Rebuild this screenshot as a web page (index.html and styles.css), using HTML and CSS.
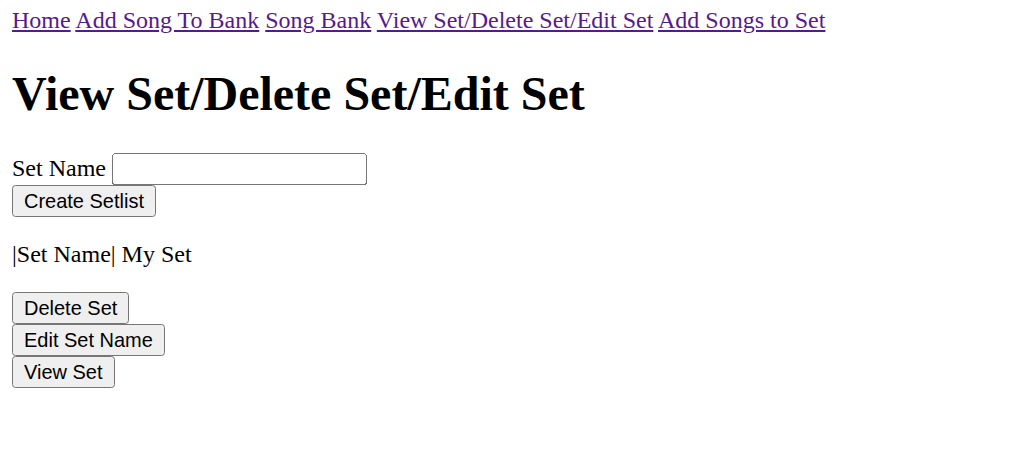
FILE: index.html
```html
<!DOCTYPE html>
<html>
<head>
<meta charset="utf-8">
<title>View Set</title>
<link rel="stylesheet" href="styles.css">
</head>
<body>
<nav class="nav"><a href="#">Home</a> <a href="#">Add Song To Bank</a> <a href="#">Song Bank</a> <a href="#">View Set/Delete Set/Edit Set</a> <a href="#">Add Songs to Set</a></nav>
<h1 class="title">View Set/Delete Set/Edit Set</h1>
<form class="create">
<label>Set Name</label> <input type="text" class="field"><br>
<button type="button" class="btn">Create Setlist</button>
</form>
<p class="set">|Set Name| My Set</p>
<form class="actions"><button type="button" class="btn">Delete Set</button></form>
<form class="actions"><button type="button" class="btn">Edit Set Name</button></form>
<form class="actions"><button type="button" class="btn">View Set</button></form>
</body>
</html>
```
FILE: styles.css
```css
html {
  zoom: 1.5;
}
body {
  margin: 4.667px 8px 8px;
  font-family: "Liberation Serif", "Times New Roman", serif;
  font-size: 16px;
  color: #000;
  background: #fff;
}
.nav a {
  color: #551a8b;
  text-decoration: underline;
}
.title {
  font-size: 2em;
  font-weight: bold;
  margin: 0.67em 0;
}
.create, .actions {
  margin: 0;
}
.field {
  font-family: "Liberation Sans", Arial, sans-serif;
  font-size: 13.333px;
  box-sizing: border-box;
  width: 170px;
}
.btn {
  font-family: "Liberation Sans", Arial, sans-serif;
  font-size: 13.333px;
}
.set {
  margin: 1em 0;
}
```
